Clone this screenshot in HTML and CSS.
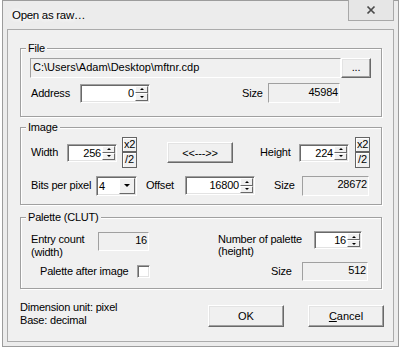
FILE: index.html
```html
<!DOCTYPE html>
<html lang="en">
<head>
  <meta charset="utf8"/>
  <title>Open as raw...</title>
  <link rel="stylesheet" href="styles.css">
</head>
<body>
  <div class="window">
    <div class="titlebar">
      <span class="title">Open as raw…</span>
      <span class="close">
        <svg width="10" height="10" viewBox="0 0 10 10"><path d="M1.5 1.5L8.5 8.5M8.5 1.5L1.5 8.5" stroke="#4a4a4a" stroke-width="1.7"/></svg>
      </span>
    </div>
    <div class="client">
      <div class="group group-file">
        <span class="legend">File</span>
        <div class="row row-path">
          <div class="static path">C:\Users\Adam\Desktop\mftnr.cdp</div>
          <div class="btn btn-browse">...</div>
        </div>
        <div class="row row-addr">
          <span class="label w-addr">Address</span>
          <div class="spin w-70 h-19"><span class="val">0</span><span class="arrows"><i class="up"></i><i class="down"></i></span></div>
          <span class="label w-fsize">Size</span>
          <div class="static num w-72 h-20">45984</div>
        </div>
      </div>

      <div class="group group-image">
        <span class="legend">Image</span>
        <div class="row row-dim">
          <span class="label w-width">Width</span>
          <div class="spin w-50 h-18"><span class="val">256</span><span class="arrows"><i class="up"></i><i class="down"></i></span></div>
          <div class="mulstack ml-5"><span class="mul">x2</span><span class="mul">/2</span></div>
          <div class="btn btn-swap">&lt;&lt;---&gt;&gt;</div>
          <span class="label w-height">Height</span>
          <div class="spin w-50 h-18"><span class="val">224</span><span class="arrows"><i class="up"></i><i class="down"></i></span></div>
          <div class="mulstack ml-6"><span class="mul">x2</span><span class="mul">/2</span></div>
        </div>
        <div class="row row-bpp">
          <span class="label w-bpp">Bits per pixel</span>
          <div class="combo"><span class="val">4</span><span class="drop"><i class="down"></i></span></div>
          <span class="label w-offset">Offset</span>
          <div class="spin w-70 h-19"><span class="val">16800</span><span class="arrows"><i class="up"></i><i class="down"></i></span></div>
          <span class="label w-isize">Size</span>
          <div class="static num top w-67 h-20">28672</div>
        </div>
      </div>

      <div class="group group-palette">
        <span class="legend">Palette (CLUT)</span>
        <div class="row row-count">
          <span class="label two w-count">Entry count<br>(width)</span>
          <div class="static num top w-51 h-19">16</div>
          <span class="label two tight w-npal">Number of palette<br>(height)</span>
          <div class="spin w-48 h-18 up-1"><span class="val">16</span><span class="arrows"><i class="up"></i><i class="down"></i></span></div>
        </div>
        <div class="row row-after">
          <span class="label w-after">Palette after image</span>
          <span class="check"></span>
          <span class="label w-psize">Size</span>
          <div class="static num top w-66 h-19">512</div>
        </div>
      </div>

      <div class="footer">
        <div class="notes">Dimension unit: pixel<br>Base: decimal</div>
        <div class="btn btn-dlg">OK</div>
        <div class="btn btn-dlg ml-24"><u>C</u>ancel</div>
      </div>
    </div>
  </div>
</body>
</html>
```

FILE: styles.css
```css
* { box-sizing: border-box; }
body {
  margin: 0; background: #fff;
  font-family: "Liberation Sans", Arial, sans-serif; font-size: 11px; letter-spacing: -0.2px; color: #000;
}
.window {
  margin-left: 2px; width: 397px; height: 347px; padding: 0 4px 4px 4px;
  border: 1px solid #9c9c9c; background: #ececec;
}
.titlebar { height: 28px; display: flex; justify-content: space-between; }
.title {
  margin: 7px 0 0 5px; height: 15px; font-size: 11.5px; letter-spacing: -0.3px; line-height: 15px;
  text-shadow: 0 0 4px #fff, 0 0 6px #fff, 0 0 8px #fff;
}
.close {
  margin-top: -1px; width: 46px; height: 21px; border: 1px solid #a8a8a8; border-top: none;
  background: #e6e6e6; display: flex; align-items: center; justify-content: center;
}
.client { height: 313px; border: 1px solid #ababab; background: #f0f0f0; }

.group {
  position: relative; margin-left: 12px; width: 362px;
  border: 1px solid #a0a0a0; box-shadow: inset 1px 1px 0 #fff, 1px 1px 0 #fff;
}
.group-file { margin-top: 18px; height: 69px; }
.group-image { margin-top: 10px; height: 78px; }
.group-palette { margin-top: 12px; height: 72px; }
.legend { position: absolute; top: -7px; left: 5px; padding: 0 2px; line-height: 13px; background: #f0f0f0; }

.row { display: flex; align-items: center; padding-left: 10px; }
.row-path { margin-top: 9px; padding-left: 9px; align-items: flex-start; }
.row-addr { margin-top: 5px; height: 20px; }
.row-dim { margin-top: 9px; height: 31px; }
.row-bpp { margin-top: 7px; height: 21px; }
.row-count { margin-top: 14px; align-items: flex-start; }
.row-after { margin-top: 3px; height: 19px; padding-left: 19px; }

.label { white-space: nowrap; line-height: 13px; }
.label.two { margin-top: 1px; }
.label.tight { line-height: 11.5px; margin-top: 2px; }
.w-addr { width: 49px; }
.w-fsize { margin-left: 92px; width: 26px; }
.w-width { width: 36px; }
.w-height { margin-left: 27px; width: 39px; }
.w-bpp { width: 65px; }
.w-offset { margin-left: 9px; width: 39px; }
.w-isize { margin-left: 19px; width: 28px; }
.w-count { width: 67px; }
.w-npal { margin-left: 69px; width: 96px; }
.w-after { width: 97px; }
.w-psize { margin-left: 121px; width: 31px; }

.w-48 { width: 48px; } .w-50 { width: 50px; } .w-51 { width: 51px; } .w-66 { width: 66px; }
.w-67 { width: 67px; } .w-70 { width: 70px; } .w-72 { width: 72px; }
.h-18 { height: 18px; } .h-19 { height: 19px; } .h-20 { height: 20px; }
.ml-5 { margin-left: 5px; } .ml-6 { margin-left: 6px; } .ml-24 { margin-left: 24px; }
.up-1 { margin-top: -1px; }

.static {
  border: 1px solid; border-color: #a0a0a0 #fff #fff #a0a0a0; background: #f0f0f0;
  line-height: 17px; white-space: nowrap; overflow: hidden;
}
.static.num { text-align: right; padding-right: 1px; }
.static.top { line-height: 13px; padding-top: 1px; }
.path { width: 311px; height: 20px; padding-left: 2px; letter-spacing: 0; }

.btn {
  display: flex; align-items: center; justify-content: center; background: #f0f0f0;
  border: 1px solid; border-color: #fff #696969 #696969 #fff;
  box-shadow: inset -1px -1px 0 #a0a0a0, inset 1px 1px 0 #e3e3e3;
}
.btn-browse { width: 30px; height: 20px; padding-bottom: 3px; }
.btn-swap { margin-left: 30px; width: 66px; height: 21px; }
.btn-dlg { width: 76px; height: 22px; letter-spacing: 0; }

.spin, .combo {
  display: flex; padding: 1px; background: #fff;
  border: 1px solid; border-color: #a0a0a0 #fff #fff #a0a0a0;
  box-shadow: inset 1px 1px 0 #696969, inset -1px -1px 0 #e3e3e3;
}
.spin .val { flex: 1; text-align: right; line-height: 14px; padding-right: 1px; }
.arrows { width: 13px; display: flex; flex-direction: column; }
.arrows i, .drop {
  flex: 1; display: flex; align-items: center; justify-content: center; background: #f0f0f0;
  border: 1px solid; border-color: #fff #696969 #696969 #fff;
}
i.up::after, i.down::after { content: ""; width: 0; height: 0; border-left: 2px solid transparent; border-right: 2px solid transparent; }
i.up::after { border-bottom: 2px solid #000; }
i.down::after { border-top: 2px solid #000; }
.drop i.down { display: flex; }
.drop i.down::after { border-left-width: 3px; border-right-width: 3px; border-top-width: 3px; }

.combo { width: 41px; height: 20px; }
.combo .val { flex: 1; padding-left: 1px; line-height: 16px; }
.drop { flex: none; width: 16px; }

.mulstack { display: flex; flex-direction: column; }
.mul {
  width: 15px; height: 15px; line-height: 13px; text-align: center; background: #f0f0f0;
  border: 1px solid #646464; box-shadow: inset 1px 1px 0 #fff;
}
.mul + .mul { height: 16px; }

.check {
  width: 13px; height: 13px; background: #fff;
  border: 1px solid; border-color: #a0a0a0 #fff #fff #a0a0a0;
  box-shadow: inset 1px 1px 0 #696969, inset -1px -1px 0 #e3e3e3;
}

.footer { display: flex; align-items: flex-start; margin-top: 12px; margin-left: 12px; }
.notes { width: 188px; line-height: 13px; }
.footer .btn { margin-top: 4px; }
```
